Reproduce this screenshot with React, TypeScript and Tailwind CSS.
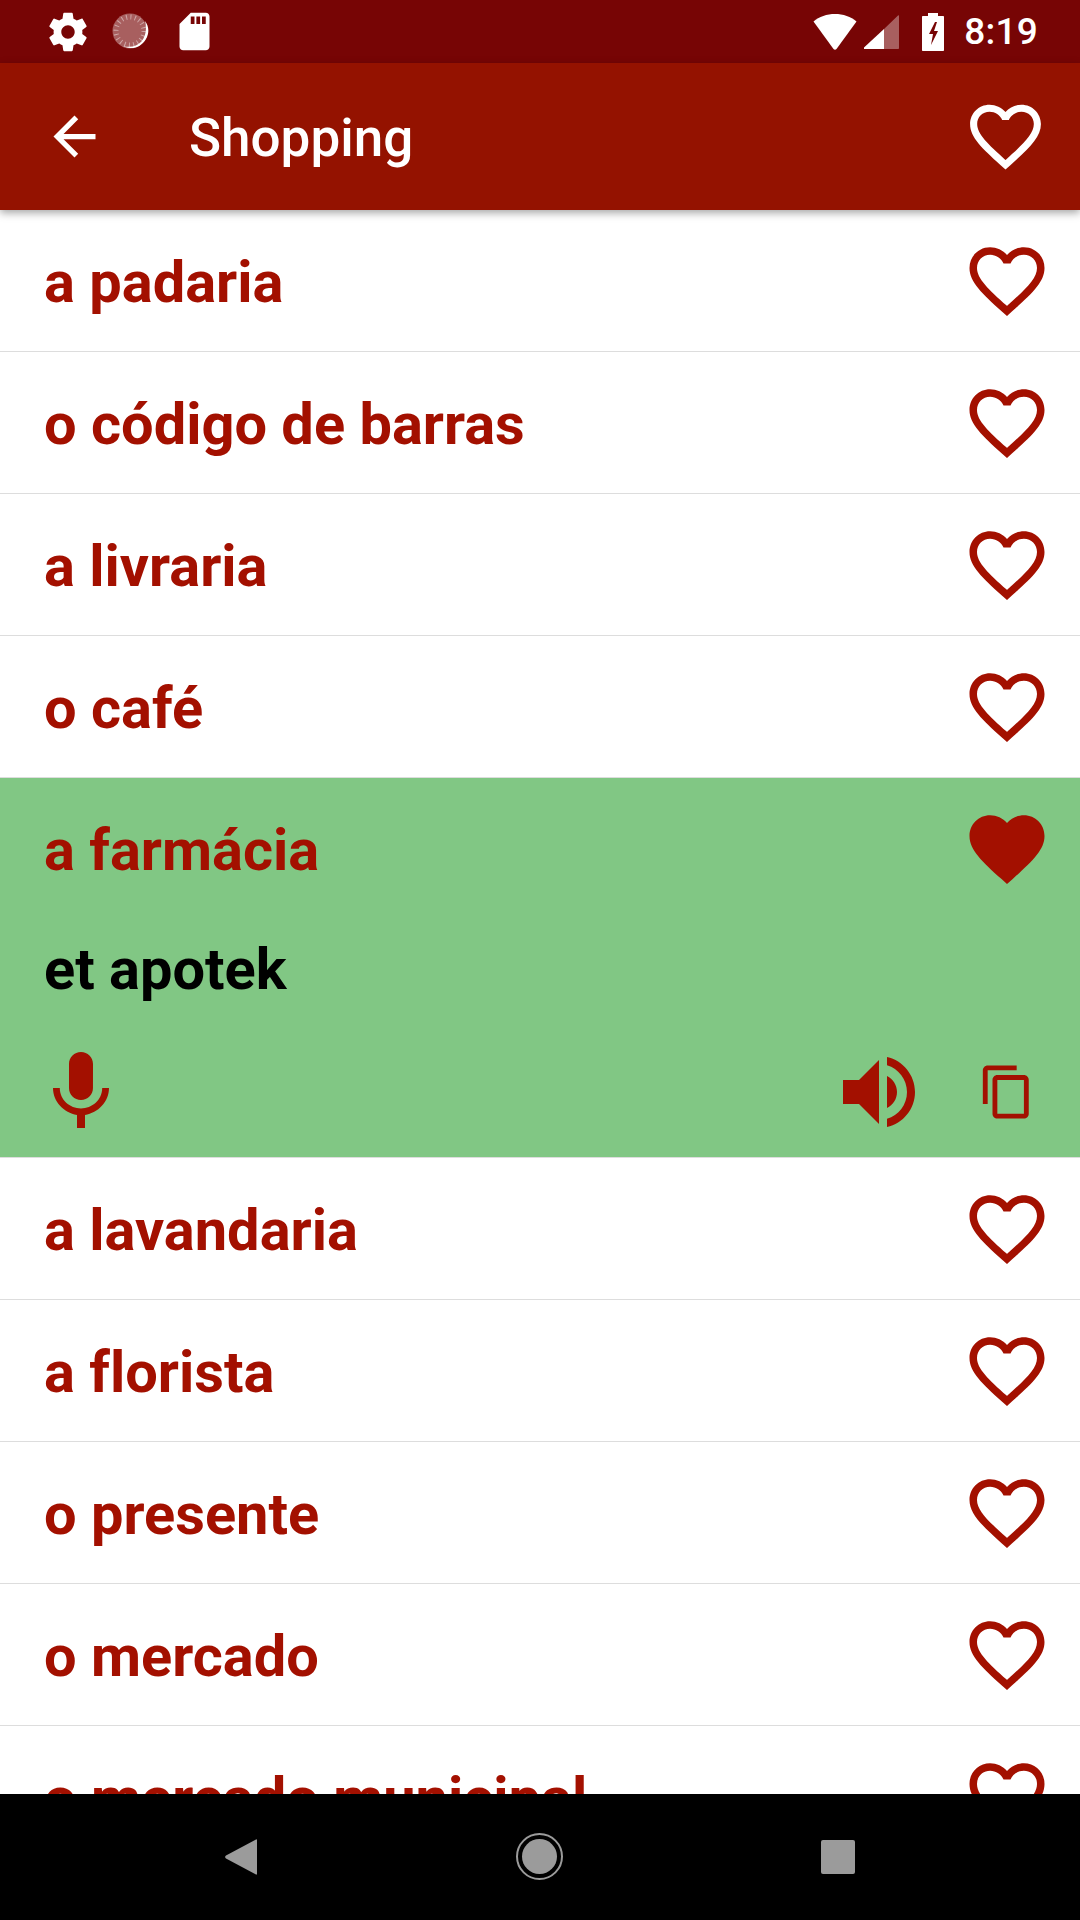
const HEART_OUTLINE =
  "M16.5 3c-1.74 0-3.41.81-4.5 2.09C10.91 3.81 9.24 3 7.5 3 4.42 3 2 5.42 2 8.5c0 3.78 3.4 6.86 8.55 11.54L12 21.35l1.45-1.32C18.6 15.36 22 12.28 22 8.5 22 5.42 19.58 3 16.5 3zm-4.4 15.55l-.1.1-.1-.1C7.14 14.24 4 11.39 4 8.5 4 6.5 5.5 5 7.5 5c1.54 0 3.04.99 3.57 2.36h1.87C13.46 5.99 14.96 5 16.5 5c2 0 3.5 1.5 3.5 3.5 0 2.89-3.14 5.74-7.9 10.05z";
const HEART_FILLED =
  "M12 21.35l-1.45-1.32C5.4 15.36 2 12.28 2 8.5 2 5.42 4.42 3 7.5 3c1.74 0 3.41.81 4.5 2.09C13.09 3.81 14.76 3 16.5 3 19.58 3 22 5.42 22 8.5c0 3.78-3.4 6.86-8.55 11.54L12 21.35z";
const MIC =
  "M12 14c1.66 0 2.99-1.34 2.99-3L15 5c0-1.66-1.34-3-3-3S9 3.34 9 5v6c0 1.66 1.34 3 3 3zm5.3-3c0 3-2.54 5.1-5.3 5.1S6.7 14 6.7 11H5c0 3.41 2.72 6.23 6 6.72V21h2v-3.28c3.28-.48 6-3.3 6-6.72h-1.7z";
const VOLUME =
  "M3 9v6h4l5 5V4L7 9H3zm13.5 3c0-1.77-1.02-3.29-2.5-4.03v8.05c1.48-.73 2.5-2.25 2.5-4.02zM14 3.23v2.06c2.89.86 5 3.54 5 6.71s-2.11 5.85-5 6.71v2.06c4.01-.91 7-4.49 7-8.77s-2.99-7.86-7-8.77z";
const COPY =
  "M16 1H4c-1.1 0-2 .9-2 2v14h2V3h12V1zm3 4H8c-1.1 0-2 .9-2 2v14c0 1.1.9 2 2 2h11c1.1 0 2-.9 2-2V7c0-1.1-.9-2-2-2zm0 16H8V7h11v14z";
const GEAR =
  "M19.43 12.98c.04-.32.07-.64.07-.98s-.03-.66-.07-.98l2.11-1.65c.19-.15.24-.42.12-.64l-2-3.46c-.12-.22-.39-.3-.61-.22l-2.49 1c-.52-.4-1.08-.73-1.69-.98l-.38-2.65C14.46 2.18 14.25 2 14 2h-4c-.25 0-.46.18-.49.42l-.38 2.65c-.61.25-1.17.59-1.69.98l-2.49-1c-.23-.09-.49 0-.61.22l-2 3.46c-.13.22-.07.49.12.64l2.11 1.65c-.04.32-.07.65-.07.98s.03.66.07.98l-2.11 1.65c-.19.15-.24.42-.12.64l2 3.46c.12.22.39.3.61.22l2.49-1c.52.4 1.08.73 1.69.98l.38 2.65c.03.24.24.42.49.42h4c.25 0 .46-.18.49-.42l.38-2.65c.61-.25 1.17-.59 1.69-.98l2.49 1c.23.09.49 0 .61-.22l2-3.46c.12-.22.07-.49-.12-.64l-2.11-1.65zM12 15.5c-1.93 0-3.5-1.57-3.5-3.5s1.57-3.5 3.5-3.5 3.5 1.57 3.5 3.5-1.57 3.5-3.5 3.5z";
const SD_CARD =
  "M18 2h-8L4.02 8 4 20c0 1.1.9 2 2 2h12c1.1 0 2-.9 2-2V4c0-1.1-.9-2-2-2zm-6 6h-2V4h2v4zm3 0h-2V4h2v4zm3 0h-2V4h2v4z";
const ARROW_BACK = "M20 11H7.83l5.59-5.59L12 4l-8 8 8 8 1.41-1.41L7.83 13H20v-2z";

const TOP_WORDS = ["a padaria", "o código de barras", "a livraria", "o café"];
const BOTTOM_WORDS = [
  "a lavandaria",
  "a florista",
  "o presente",
  "o mercado",
  "o mercado municipal",
];

function Icon({ d, className }: { d: string; className: string }) {
  return (
    <svg viewBox="0 0 24 24" fill="currentColor" className={className}>
      <path d={d} />
    </svg>
  );
}

function SyncIcon() {
  return (
    <svg viewBox="0 0 37 37" className="ml-[21px] h-[37px] w-[37px]">
      <circle cx="18" cy="18" r="17.5" fill="#fff" fillOpacity="0.36" />
      <circle
        cx="18"
        cy="18"
        r="14"
        fill="none"
        stroke="#fff"
        strokeOpacity="0.45"
        strokeWidth="5"
        strokeDasharray="1 3.4"
      />
      <path
        d="M33 8c4 5 4.5 12 1 18-3.4 6-9.5 9.5-16 9-3-.2-5-1-7-2 7 2 14 .5 18.500-4.500C34 23 35 15 33 8z"
        fill="#fff"
      />
    </svg>
  );
}

function StatusBar() {
  return (
    <div className="flex h-[63px] shrink-0 items-center bg-[#770505] text-white">
      <Icon d={GEAR} className="ml-[45px] h-[46px] w-[46px]" />
      <SyncIcon />
      <Icon d={SD_CARD} className="ml-[23px] h-[45px] w-[45px]" />
      <div className="flex-1" />
      <svg viewBox="0 0 44 36" className="h-[36px] w-[44px]" fill="#fff">
        <path d="M0.500 7.500C6 2.500 14 0 22 0s16 2.500 21.500 7.500L23.500 35c-.8 1-2.200 1-3 0z" />
      </svg>
      <svg viewBox="0 0 35 35" className="ml-[7px] h-[35px] w-[35px]">
        <path d="M20 15 0 33.500V35h20z" fill="#fff" />
        <path d="M20 15 34 1.500c.5-.5 1-.2 1 .5v32c0 .6-.4 1-1 1H20z" fill="#fff" fillOpacity="0.36" />
      </svg>
      <svg viewBox="0 0 22 38" className="ml-[23px] h-[38px] w-[22px]">
        <path
          fill="#fff"
          fillRule="evenodd"
          d="M6 0h10v3h5c.6 0 1 .4 1 1v33c0 .6-.4 1-1 1H1c-.6 0-1-.4-1-1V4c0-.6.4-1 1-1h5zM13 9 7 21h4l-2 11 7-14h-4l3-9z"
        />
      </svg>
      <span className="mr-[42px] ml-[20px] text-[37px] leading-none font-medium tracking-[0.2px]">
        8:19
      </span>
    </div>
  );
}

function AppBar() {
  return (
    <div className="relative z-10 flex h-[147px] shrink-0 items-center bg-[#941200] text-white shadow-[0_3px_8px_rgba(0,0,0,0.35)]">
      <Icon d={ARROW_BACK} className="ml-[43px] h-[63px] w-[63px]" />
      <h1 className="ml-[83px] flex-1 pt-[4px] text-[53px] leading-none font-medium">
        Shopping
      </h1>
      <Icon d={HEART_OUTLINE} className="mr-[32px] h-[85px] w-[85px]" />
    </div>
  );
}

function WordRow({ word }: { word: string }) {
  return (
    <div className="flex h-[142px] items-center justify-between border-b border-[#dddddd] pr-[28px] pl-[44px]">
      <span className="pt-[4px] text-[57.75px] leading-none font-bold [font-variant-ligatures:none]">
        {word}
      </span>
      <Icon d={HEART_OUTLINE} className="h-[90px] w-[90px]" />
    </div>
  );
}

function ExpandedRow() {
  return (
    <div className="flex h-[380px] flex-col border-b border-[#dddddd] bg-[#81c784] pr-[28px] pl-[44px]">
      <div className="flex h-[142px] items-center justify-between">
        <span className="pt-[4px] text-[57.75px] leading-none font-bold">a farmácia</span>
        <Icon d={HEART_FILLED} className="h-[90px] w-[90px]" />
      </div>
      <p className="text-[57.75px] leading-[98px] font-bold text-black">et apotek</p>
      <div className="mt-[26px] -ml-[11px] flex h-[96px] items-center">
        <Icon d={MIC} className="h-[96px] w-[96px]" />
        <div className="flex-1" />
        <Icon d={VOLUME} className="mr-[51px] h-[96px] w-[96px]" />
        <Icon d={COPY} className="mr-[16px] h-[58px] w-[58px]" />
      </div>
    </div>
  );
}

function NavBar() {
  return (
    <div className="flex h-[126px] shrink-0 items-center bg-black pb-[1px] text-[#9b9b9b]">
      <svg viewBox="0 0 32 36" fill="currentColor" className="ml-[225px] h-[36px] w-[32px]">
        <path d="M31 0.500c.6-.4 1 .1 1 .8v33.400c0 .7-.4 1.200-1 .8L1 19.600c-1.200-.8-1.200-2.400 0-3.200z" />
      </svg>
      <div className="ml-[259px] flex h-[47px] w-[47px] items-center justify-center rounded-full border-2 border-[#9b9b9b]">
        <div className="h-[35px] w-[35px] rounded-full bg-[#9b9b9b]" />
      </div>
      <div className="ml-[258px] h-[34px] w-[34px] rounded-[2px] bg-[#9b9b9b]" />
    </div>
  );
}

export default function App() {
  return (
    <div className="flex h-[1920px] w-[1080px] flex-col overflow-hidden bg-white font-['Roboto',sans-serif]">
      <StatusBar />
      <AppBar />
      <div className="min-h-0 flex-1 overflow-hidden text-[#a31000]">
        {TOP_WORDS.map((word) => (
          <WordRow key={word} word={word} />
        ))}
        <ExpandedRow />
        {BOTTOM_WORDS.map((word) => (
          <WordRow key={word} word={word} />
        ))}
      </div>
      <NavBar />
    </div>
  );
}
